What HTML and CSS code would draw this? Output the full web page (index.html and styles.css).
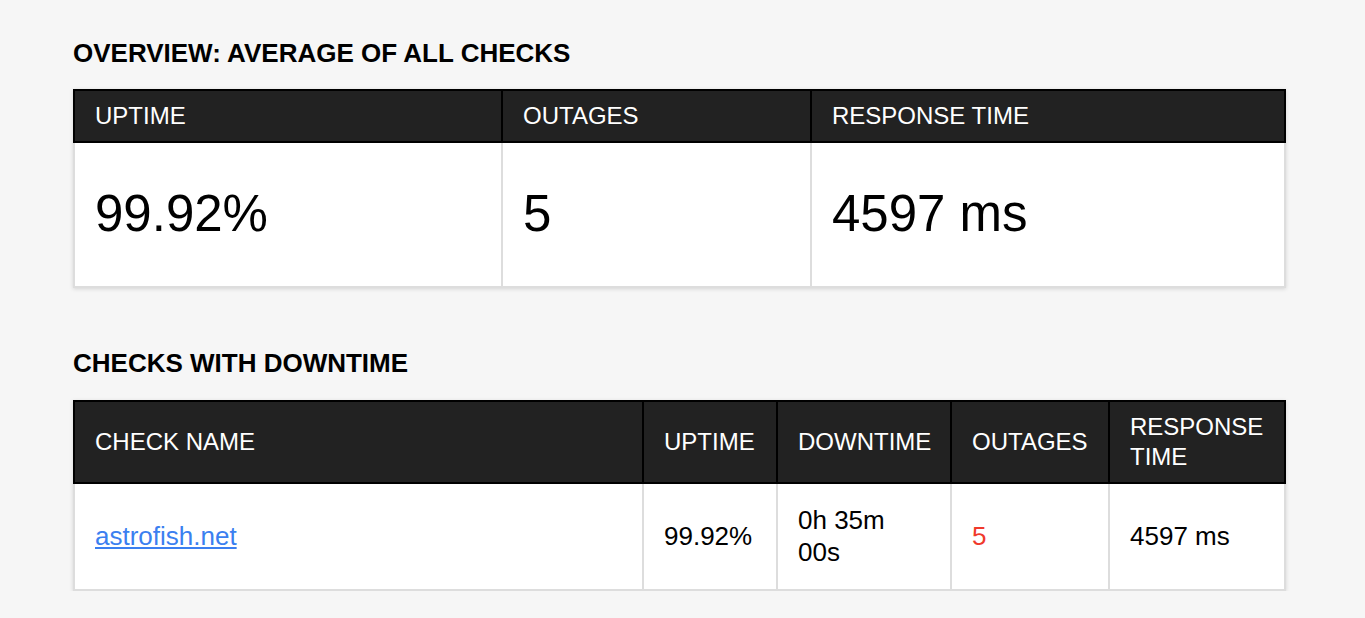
FILE: index.html
```html
<!DOCTYPE html>
<html lang="en">
<head>
<meta charset="utf-8">
<title>Uptime report</title>
<link rel="stylesheet" href="styles.css">
</head>
<body>
<main class="report">
  <section class="section section-overview">
    <h2 class="section-title">OVERVIEW: AVERAGE OF ALL CHECKS</h2>
    <table class="data-table overview-table">
      <colgroup>
        <col class="c-o1"><col class="c-o2"><col class="c-o3">
      </colgroup>
      <thead>
        <tr><th>UPTIME</th><th>OUTAGES</th><th>RESPONSE TIME</th></tr>
      </thead>
      <tbody>
        <tr>
          <td class="big">99.92%</td>
          <td class="big">5</td>
          <td class="big">4597 ms</td>
        </tr>
      </tbody>
    </table>
  </section>

  <section class="section section-downtime">
    <h2 class="section-title">CHECKS WITH DOWNTIME</h2>
    <table class="data-table checks-table">
      <colgroup>
        <col class="c-d1"><col class="c-d2"><col class="c-d3"><col class="c-d4"><col class="c-d5">
      </colgroup>
      <thead>
        <tr><th>CHECK NAME</th><th>UPTIME</th><th>DOWNTIME</th><th>OUTAGES</th><th>RESPONSE TIME</th></tr>
      </thead>
      <tbody>
        <tr>
          <td><a class="check-link" href="#">astrofish.net</a></td>
          <td>99.92%</td>
          <td>0h 35m<br>00s</td>
          <td class="bad">5</td>
          <td>4597 ms</td>
        </tr>
      </tbody>
    </table>
  </section>
</main>
</body>
</html>
```

FILE: styles.css
```css
html, body {
  margin: 0;
  padding: 0;
  background: #f6f6f6;
  color: #000;
  font-family: "Liberation Sans", Arial, Helvetica, sans-serif;
}

.report {
  padding: 38px 0 0 73px;
  width: 1211px;
}

.section-title {
  margin: 0;
  font-size: 26px;
  line-height: 30px;
  font-weight: bold;
  color: #000;
}

.section-overview .section-title {
  margin-bottom: 21px;
}

.section-downtime {
  margin-top: 60px;
}

.section-downtime .section-title {
  margin-bottom: 22px;
}

.data-table {
  width: 1211px;
  table-layout: fixed;
  border-collapse: collapse;
  background: #fff;
  box-shadow: 0 1px 4px rgba(0, 0, 0, 0.14);
}

.c-o1 { width: 428px; }
.c-o2 { width: 309px; }
.c-o3 { width: 474px; }

.c-d1 { width: 569px; }
.c-d2 { width: 134px; }
.c-d3 { width: 174px; }
.c-d4 { width: 158px; }
.c-d5 { width: 176px; }

.data-table th {
  background: #222;
  color: #fff;
  border: 2px solid #000;
  text-align: left;
  font-weight: normal;
  font-size: 24px;
  line-height: 30px;
  padding: 10px 20px;
  vertical-align: middle;
}

.data-table td {
  border: 2px solid #ddd;
  font-size: 26px;
  line-height: 32px;
  padding: 20px 20px 21px;
  vertical-align: middle;
  color: #000;
}

.data-table td.big {
  font-size: 51px;
  line-height: 58px;
  padding: 42px 20px 43px;
}

.check-link {
  color: #3b7ff0;
  text-decoration: underline;
}

.bad {
  color: #f0392b !important;
}
```
